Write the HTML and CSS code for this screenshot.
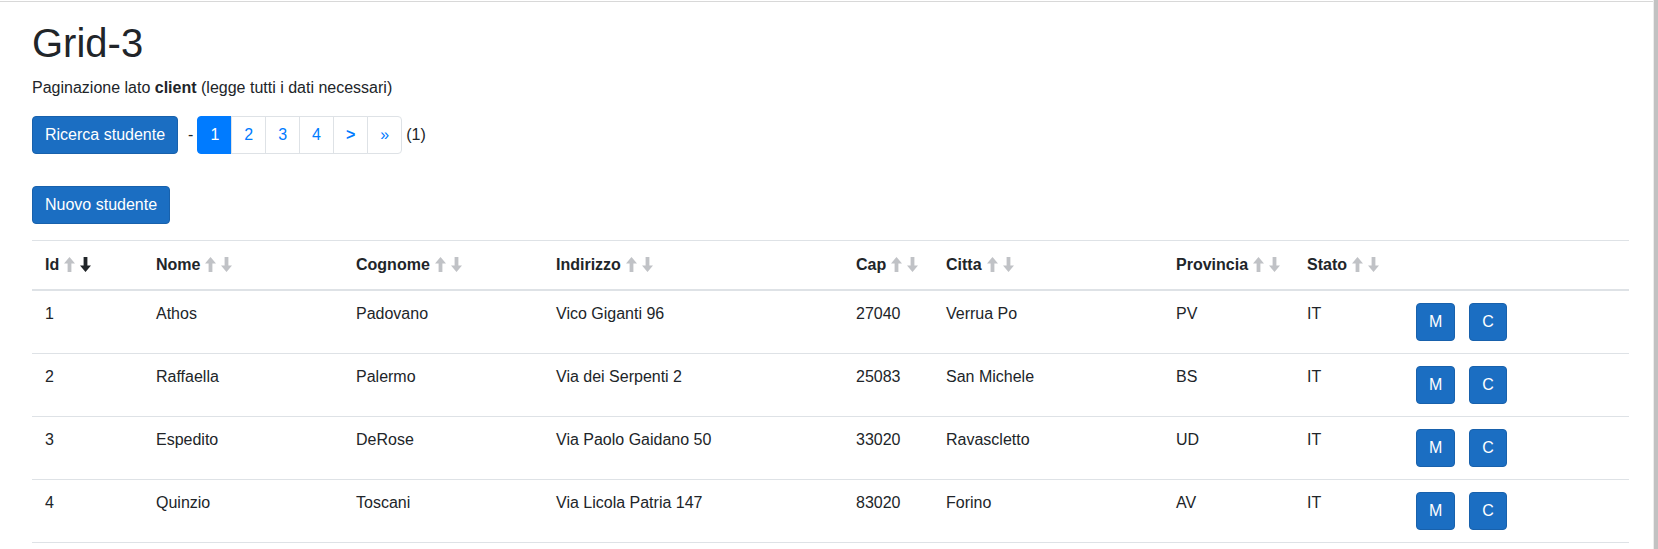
FILE: index.html
```html
<!DOCTYPE html>
<html lang="it">
<head>
<meta charset="utf-8">
<title>Grid-3</title>
<link rel="stylesheet" href="styles.css">
</head>
<body>
<div class="page">
  <main class="main">
    <h1 class="title">Grid-3</h1>
    <p class="subtitle">Paginazione lato <b>client</b> (legge tutti i dati necessari)</p>
    <div class="toolbar">
      <button class="btn">Ricerca studente</button>
      <span class="dash">-</span>
      <ul class="pagination">
        <li class="page-link active">1</li>
        <li class="page-link">2</li>
        <li class="page-link">3</li>
        <li class="page-link">4</li>
        <li class="page-link"><b>&gt;</b></li>
        <li class="page-link">&raquo;</li>
      </ul>
      <span class="count">(1)</span>
    </div>
    <div class="new-row">
      <button class="btn">Nuovo studente</button>
    </div>
    <table class="grid">
      <colgroup>
        <col class="c-id"><col class="c-nome"><col class="c-cognome"><col class="c-ind">
        <col class="c-cap"><col class="c-citta"><col class="c-prov"><col class="c-stato"><col>
      </colgroup>
      <thead>
        <tr>
          <th>Id<span class="sort"><svg viewBox="0 0 11 15"><path d="M5.5 0 L11 6.5 H7.4 V15 H3.6 V6.5 H0 Z"/></svg><svg class="on" viewBox="0 0 11 15"><path d="M5.5 15 L11 8.5 H7.4 V0 H3.6 V8.5 H0 Z"/></svg></span></th>
          <th>Nome<span class="sort"><svg viewBox="0 0 11 15"><path d="M5.5 0 L11 6.5 H7.4 V15 H3.6 V6.5 H0 Z"/></svg><svg viewBox="0 0 11 15"><path d="M5.5 15 L11 8.5 H7.4 V0 H3.6 V8.5 H0 Z"/></svg></span></th>
          <th>Cognome<span class="sort"><svg viewBox="0 0 11 15"><path d="M5.5 0 L11 6.5 H7.4 V15 H3.6 V6.5 H0 Z"/></svg><svg viewBox="0 0 11 15"><path d="M5.5 15 L11 8.5 H7.4 V0 H3.6 V8.5 H0 Z"/></svg></span></th>
          <th>Indirizzo<span class="sort"><svg viewBox="0 0 11 15"><path d="M5.5 0 L11 6.5 H7.4 V15 H3.6 V6.5 H0 Z"/></svg><svg viewBox="0 0 11 15"><path d="M5.5 15 L11 8.5 H7.4 V0 H3.6 V8.5 H0 Z"/></svg></span></th>
          <th>Cap<span class="sort"><svg viewBox="0 0 11 15"><path d="M5.5 0 L11 6.5 H7.4 V15 H3.6 V6.5 H0 Z"/></svg><svg viewBox="0 0 11 15"><path d="M5.5 15 L11 8.5 H7.4 V0 H3.6 V8.5 H0 Z"/></svg></span></th>
          <th>Citta<span class="sort"><svg viewBox="0 0 11 15"><path d="M5.5 0 L11 6.5 H7.4 V15 H3.6 V6.5 H0 Z"/></svg><svg viewBox="0 0 11 15"><path d="M5.5 15 L11 8.5 H7.4 V0 H3.6 V8.5 H0 Z"/></svg></span></th>
          <th>Provincia<span class="sort"><svg viewBox="0 0 11 15"><path d="M5.5 0 L11 6.5 H7.4 V15 H3.6 V6.5 H0 Z"/></svg><svg viewBox="0 0 11 15"><path d="M5.5 15 L11 8.5 H7.4 V0 H3.6 V8.5 H0 Z"/></svg></span></th>
          <th>Stato<span class="sort"><svg viewBox="0 0 11 15"><path d="M5.5 0 L11 6.5 H7.4 V15 H3.6 V6.5 H0 Z"/></svg><svg viewBox="0 0 11 15"><path d="M5.5 15 L11 8.5 H7.4 V0 H3.6 V8.5 H0 Z"/></svg></span></th>
          <th></th>
        </tr>
      </thead>
      <tbody>
        <tr><td>1</td><td>Athos</td><td>Padovano</td><td>Vico Giganti 96</td><td>27040</td><td>Verrua Po</td><td>PV</td><td>IT</td><td><div class="actions"><button class="btn sm">M</button><button class="btn sm">C</button></div></td></tr>
        <tr><td>2</td><td>Raffaella</td><td>Palermo</td><td>Via dei Serpenti 2</td><td>25083</td><td>San Michele</td><td>BS</td><td>IT</td><td><div class="actions"><button class="btn sm">M</button><button class="btn sm">C</button></div></td></tr>
        <tr><td>3</td><td>Espedito</td><td>DeRose</td><td>Via Paolo Gaidano 50</td><td>33020</td><td>Ravascletto</td><td>UD</td><td>IT</td><td><div class="actions"><button class="btn sm">M</button><button class="btn sm">C</button></div></td></tr>
        <tr><td>4</td><td>Quinzio</td><td>Toscani</td><td>Via Licola Patria 147</td><td>83020</td><td>Forino</td><td>AV</td><td>IT</td><td><div class="actions"><button class="btn sm">M</button><button class="btn sm">C</button></div></td></tr>
      </tbody>
    </table>
  </main>
  <div class="scrollbar"></div>
</div>
</body>
</html>
```
FILE: styles.css
```css
* { box-sizing: border-box; }
html, body { margin: 0; padding: 0; background: #fff; }
body {
  font-family: "Liberation Sans", Arial, sans-serif;
  font-size: 16px;
  line-height: 1.5;
  color: #212529;
}
.page {
  display: flex;
  height: 549px;
  overflow: hidden;
  padding-top: 1px;
}
.main {
  flex: 1;
  border-top: 1px solid #d8d8d8;
  padding: 17px 24px 0 32px;
}
.scrollbar {
  width: 5px;
  border-left: 1px solid #ececec;
  background: #c2c2c2;
  margin-top: -1px;
}
.title {
  font-size: 40px;
  font-weight: 400;
  line-height: 48px;
  margin: 0 0 9px 0;
}
.subtitle {
  margin: 0 0 16px 0;
}
.subtitle b { font-weight: 700; }
.toolbar {
  display: flex;
  align-items: center;
  height: 38px;
}
.btn {
  font-family: inherit;
  font-size: 16px;
  line-height: 24px;
  color: #fff;
  background: #1b6ec2;
  border: 1px solid #1861ac;
  border-radius: 4px;
  padding: 6px 12px;
  cursor: pointer;
}
.dash { margin: 0 4px 0 10px; }
.pagination {
  display: flex;
  list-style: none;
  margin: 0;
  padding: 0;
}
.page-link {
  display: block;
  padding: 8px 12px;
  line-height: 20px;
  color: #007bff;
  border: 1px solid #dee2e6;
  margin-left: -1px;
  background: #fff;
}
.page-link:first-child { margin-left: 0; border-radius: 4px 0 0 4px; }
.page-link:last-child { border-radius: 0 4px 4px 0; }
.page-link.active { background: #007bff; border-color: #007bff; color: #fff; }
.page-link b { font-weight: 700; }
.count { margin-left: 4px; }
.new-row { margin-top: 32px; }
.grid {
  width: 100%;
  margin-top: 16px;
  border-collapse: collapse;
  table-layout: fixed;
}
.c-id { width: 111px; }
.c-nome { width: 200px; }
.c-cognome { width: 200px; }
.c-ind { width: 300px; }
.c-cap { width: 90px; }
.c-citta { width: 230px; }
.c-prov { width: 131px; }
.c-stato { width: 109px; }
.grid th, .grid td {
  padding: 12px 11px 12px 13px;
  text-align: left;
  vertical-align: top;
  border-top: 1px solid #dee2e6;
}
.grid thead th {
  border-bottom: 2px solid #dee2e6;
  font-weight: 700;
  white-space: nowrap;
}
.grid tbody tr:last-child td { border-bottom: 1px solid #dee2e6; }
.grid tbody td { padding-top: 11px; }
.sort {
  display: inline-flex;
  gap: 5px;
  margin-left: 5px;
  vertical-align: -2px;
}
.sort svg { width: 11px; height: 15px; fill: #c0c2c6; }
.sort svg.on { fill: #212529; }
.actions { display: flex; gap: 14px; margin-top: 1px; }
```
